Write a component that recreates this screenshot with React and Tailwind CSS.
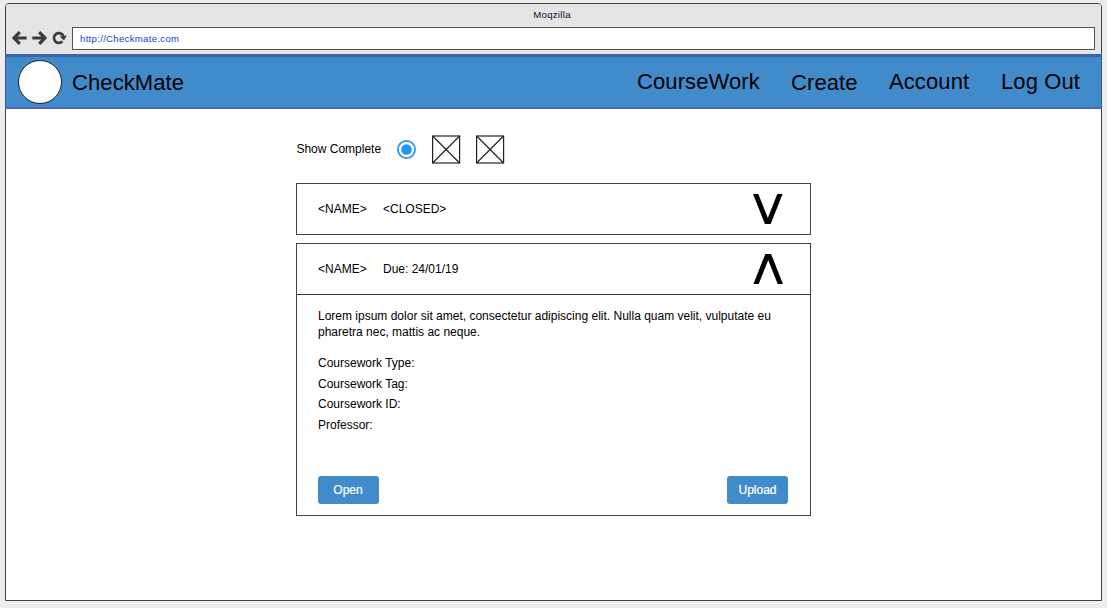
import React from "react";

function ArrowIcon({ back }) {
  return (
    <svg className={back ? "rotate-180" : ""} width="15" height="14" viewBox="0 0 15 14" fill="none" stroke="#3c3c3c" strokeWidth="3">
      <path d="M0.3 7H13M7.2 1.2L13 7L7.2 12.8" strokeWidth="3.2" />
    </svg>
  );
}

function ReloadIcon() {
  return (
    <svg width="15" height="14" viewBox="0 0 15 14" fill="none">
      <path d="M10.4 10.4A4.9 4.9 0 1 1 11.4 5.2" stroke="#3c3c3c" strokeWidth="2.7" />
      <path d="M7.6 5.4L14.8 4.6L12 9.4Z" fill="#3c3c3c" />
    </svg>
  );
}

function Placeholder() {
  return (
    <svg width="29" height="29" viewBox="0 0 29 29" fill="#fff" stroke="#222" strokeWidth="1.2">
      <rect x="0.6" y="1" width="27" height="27" />
      <path d="M0.6 1L27.6 28M27.6 1L0.6 28" />
    </svg>
  );
}

function Chevron({ up }) {
  return (
    <svg className={up ? "rotate-180" : ""} width="30" height="30" viewBox="0 0 30 30" fill="none" stroke="#000" strokeWidth="4.9">
      <path d="M0.7 -5L14.8 30.6L28.9 -5" />
    </svg>
  );
}

function CardHeader({ status, open }) {
  return (
    <div className="flex h-[50px] items-center pl-[21px] pr-[27px]">
      <span className="w-[65px] leading-4">&lt;NAME&gt;</span>
      <span className="flex-1 leading-4">{status}</span>
      <Chevron up={open} />
    </div>
  );
}

function ActionButton({ children }) {
  return (
    <button className="h-7 w-[61px] rounded-[3px] bg-[#428bca] text-center leading-7 text-white [-webkit-text-stroke:0.2px_white]">
      {children}
    </button>
  );
}

export default function App() {
  return (
    <div className="h-[608px] w-full overflow-hidden bg-[#ededed] pl-[5px] pt-[3px] font-['Liberation_Sans',Arial,sans-serif] text-xs text-black">
      <div className="h-[598px] w-[1097px] rounded-t-[4px] border border-[#404040] bg-white">
        <div className="h-[50px] rounded-t-[3px] bg-[#e5e5e5]">
          <div className="h-[23px] pr-[3px] text-center text-[9.6px] leading-[22px] tracking-[0.3px] text-[#001133]">Moqzilla</div>
          <div className="flex items-start pl-[6px]">
            <div className="flex h-[22px] w-[60px] items-center gap-[5px]">
              <ArrowIcon back />
              <ArrowIcon />
              <ReloadIcon />
            </div>
            <div className="h-[23px] w-[1023px] border border-[#555] bg-white pl-[7px] text-[9.6px] leading-[21px] tracking-[0.3px] text-[#1144cc]">
              http://Checkmate.com
            </div>
          </div>
        </div>

        <header className="-mx-px flex h-[55px] items-center border-x border-b-2 border-t-[3px] border-x-[#3354a8] border-b-[#4a69b8] border-t-[#3c64a8] bg-[#428bca] text-[22px] leading-[26px]">
          <div className="ml-3 size-11 rounded-full border border-[#222] bg-white" />
          <span className="ml-[10px] mt-0.5 w-[565px] tracking-[0.1px]">CheckMate</span>
          <nav className="flex tracking-[0.1px]">
            <a className="w-[154px]">CourseWork</a>
            <a className="mt-px w-[98px]">Create</a>
            <a className="w-[112px]">Account</a>
            <a>Log Out</a>
          </nav>
        </header>

        <main className="ml-[290px] mt-[26px] w-[515px]">
          <div className="flex h-[29px] items-center">
            <span className="mb-0.5 w-[101px] pl-[0.4px] leading-4">Show Complete</span>
            <svg className="mr-4" width="19" height="19" viewBox="0 0 19 19">
              <circle cx="9.5" cy="9.5" r="8.6" fill="#fff" stroke="#2196f3" strokeWidth="1.7" />
              <circle cx="9.5" cy="9.5" r="5.3" fill="#2196f3" />
            </svg>
            <div className="flex gap-[15px]">
              <Placeholder />
              <Placeholder />
            </div>
          </div>

          <section className="mt-[19px] border border-[#444]">
            <CardHeader status="<CLOSED>" />
          </section>

          <section className="mt-2 h-[273px] border border-[#444]">
            <CardHeader status="Due: 24/01/19" open />
            <div className="flex h-[221px] flex-col border-t border-[#333] pb-[11px] pl-[20.5px] pr-[22px] pt-[13px]">
              <p className="ml-[0.5px] leading-4">
                Lorem ipsum dolor sit amet, consectetur adipiscing elit. Nulla quam velit, vulputate eu pharetra nec, mattis ac neque.
              </p>
              <div className="ml-[0.5px] mt-[15px] flex flex-col leading-4">
                <div className="mb-[5px]">Coursework Type:</div>
                <div className="mb-1">Coursework Tag:</div>
                <div className="mb-[5px]">Coursework ID:</div>
                <div>Professor:</div>
              </div>
              <div className="mt-auto flex justify-between">
                <ActionButton>Open</ActionButton>
                <ActionButton>Upload</ActionButton>
              </div>
            </div>
          </section>
        </main>
      </div>
    </div>
  );
}
